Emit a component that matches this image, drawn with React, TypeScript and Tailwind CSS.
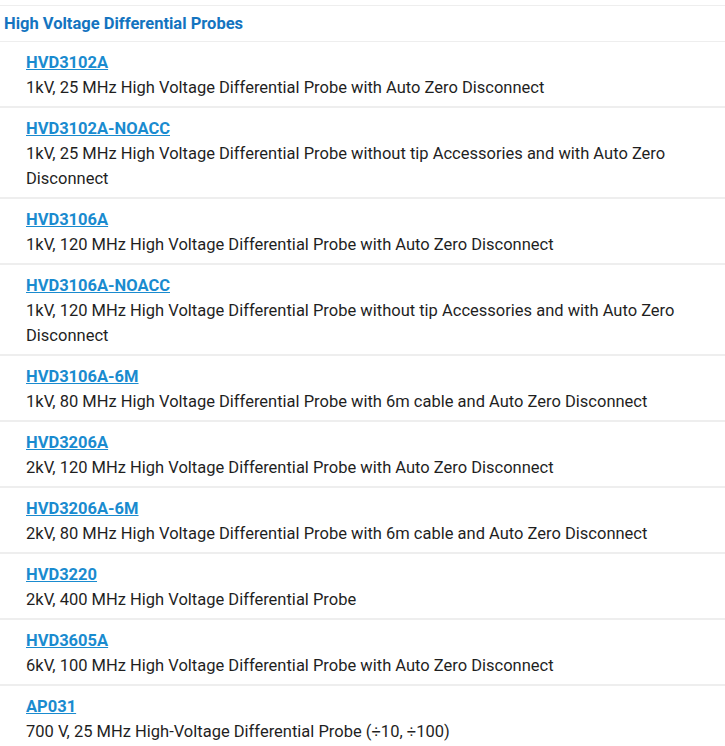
const probes = [
  { model: "HVD3102A", desc: "1kV, 25 MHz High Voltage Differential Probe with Auto Zero Disconnect" },
  { model: "HVD3102A-NOACC", desc: "1kV, 25 MHz High Voltage Differential Probe without tip Accessories and with Auto Zero Disconnect" },
  { model: "HVD3106A", desc: "1kV, 120 MHz High Voltage Differential Probe with Auto Zero Disconnect" },
  { model: "HVD3106A-NOACC", desc: "1kV, 120 MHz High Voltage Differential Probe without tip Accessories and with Auto Zero Disconnect" },
  { model: "HVD3106A-6M", desc: "1kV, 80 MHz High Voltage Differential Probe with 6m cable and Auto Zero Disconnect" },
  { model: "HVD3206A", desc: "2kV, 120 MHz High Voltage Differential Probe with Auto Zero Disconnect" },
  { model: "HVD3206A-6M", desc: "2kV, 80 MHz High Voltage Differential Probe with 6m cable and Auto Zero Disconnect" },
  { model: "HVD3220", desc: "2kV, 400 MHz High Voltage Differential Probe" },
  { model: "HVD3605A", desc: "6kV, 100 MHz High Voltage Differential Probe with Auto Zero Disconnect" },
  { model: "AP031", desc: "700 V, 25 MHz High-Voltage Differential Probe (÷10, ÷100)" },
];

export default function App() {
  return (
    <main className="min-h-screen bg-white pt-[5px] font-['Roboto',sans-serif] text-[16.5px]">
      {/* Category header */}
      <div className="border-t border-b border-[#eeeeee] h-[37px] flex items-center pl-[4px]">
        <h2 className="font-bold text-[#1474c0] leading-6">High Voltage Differential Probes</h2>
      </div>

      <ul>
        {probes.map((p) => (
          <li key={p.model} className="border-b-2 border-[#eeeeee] pl-[26px] pr-4 pt-[8px] pb-[6px]">
            <a href="#" className="block w-fit font-bold text-[#1a8bcf] underline leading-[25px]">
              {p.model}
            </a>
            <p className="text-[#1f1f1f] leading-[25px]">{p.desc}</p>
          </li>
        ))}
      </ul>
    </main>
  );
}
